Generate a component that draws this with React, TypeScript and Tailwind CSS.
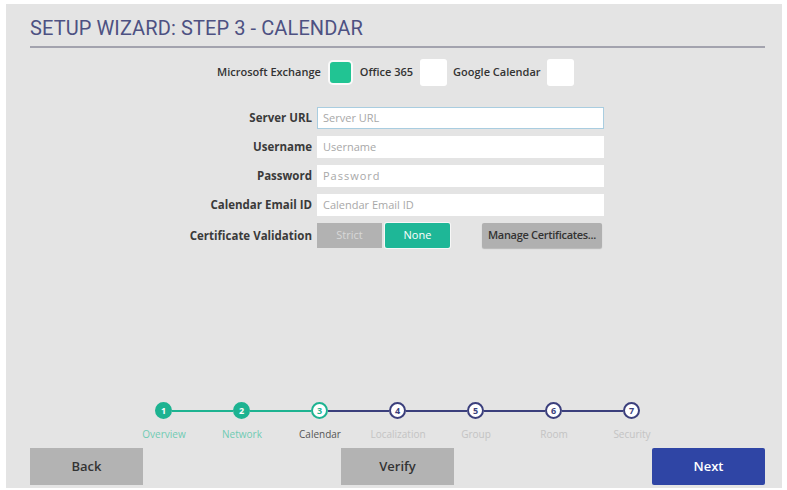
import React from 'react';

const font = { fontFamily: '"Open Sans", "Noto Sans", sans-serif' };

const steps = [
  { n: 1, label: 'Overview', state: 'done' },
  { n: 2, label: 'Network', state: 'done' },
  { n: 3, label: 'Calendar', state: 'current' },
  { n: 4, label: 'Localization', state: 'todo' },
  { n: 5, label: 'Group', state: 'todo' },
  { n: 6, label: 'Room', state: 'todo' },
  { n: 7, label: 'Security', state: 'todo' },
];

const fields = [
  { label: 'Server URL', placeholder: 'Server URL', focused: true },
  { label: 'Username', placeholder: 'Username' },
  { label: 'Password', placeholder: 'Password', spaced: true },
  { label: 'Calendar Email ID', placeholder: 'Calendar Email ID' },
];

function StepCircle({ n, state }: { n: number; state: string }) {
  if (state === 'done') {
    return (
      <div className="w-[17px] h-[17px] rounded-full bg-[#1db391] border-2 border-[#1db391] flex items-center justify-center text-[9px] font-bold text-white shrink-0">
        {n}
      </div>
    );
  }
  if (state === 'current') {
    return (
      <div className="w-[17px] h-[17px] rounded-full bg-white border-2 border-[#1db391] flex items-center justify-center text-[9px] font-bold text-[#1db391] shrink-0">
        {n}
      </div>
    );
  }
  return (
    <div className="w-[17px] h-[17px] rounded-full bg-white border-2 border-[#3b3f7c] flex items-center justify-center text-[9px] font-bold text-[#3b3f7c] shrink-0">
      {n}
    </div>
  );
}

export default function App() {
  return (
    <div className="w-[787px] h-[490px] bg-white pt-[4px] pl-[6px] pr-[5px] pb-[2px]" style={font}>
      <div className="h-full bg-[#e4e4e4] flex flex-col">
        {/* Header */}
        <div className="pl-[24px] pr-[17px] pt-[11px]">
          <h1 className="text-[20px] leading-[26px] text-[#4d5182] tracking-[0.1px] font-['Roboto',sans-serif]">
            SETUP WIZARD: STEP 3 - CALENDAR
          </h1>
          <div className="mt-[5px] h-[2px] bg-[#a3a3ae]" />
        </div>

        {/* Calendar providers */}
        <div className="flex items-center pl-[211px] mt-[10px] h-[28px] text-[11px] font-semibold text-[#333]">
          <span>Microsoft Exchange</span>
          <div className="ml-[9px] w-[21px] h-[21px] rounded-[3px] bg-[#21c493] ring-2 ring-white/80" />
          <span className="ml-[9px]">Office 365</span>
          <div className="ml-[7px] w-[27px] h-[27px] rounded-[3px] bg-white" />
          <span className="ml-[6px]">Google Calendar</span>
          <div className="ml-[6px] w-[27px] h-[27px] rounded-[3px] bg-white" />
        </div>

        {/* Form */}
        <div className="mt-[21px] ml-[176px] grid grid-cols-[130px_287px] gap-x-[5px] gap-y-[7px] items-center">
          {fields.map((f) => (
            <React.Fragment key={f.label}>
              <div className="text-right text-[11.5px] font-bold text-[#3a3a3a] whitespace-nowrap">{f.label}</div>
              <div
                className={
                  f.focused
                    ? 'h-[22px] bg-white border border-[#a9cde0] flex items-center px-[5px]'
                    : 'h-[22px] bg-white flex items-center px-[6px]'
                }
              >
                <span
                  className={
                    f.spaced
                      ? 'text-[11px] text-[#a8a8a8] tracking-[1px]'
                      : 'text-[11px] text-[#a8a8a8]'
                  }
                >
                  {f.placeholder}
                </span>
              </div>
            </React.Fragment>
          ))}
          <div className="text-right text-[11.5px] font-bold text-[#3a3a3a] whitespace-nowrap">Certificate Validation</div>
          <div className="flex items-center h-[25px]">
            <button className="w-[65px] h-[25px] bg-[#b2b2b2] text-[11px] text-[#d8d8d8]">Strict</button>
            <button className="ml-[3px] w-[65px] h-[25px] bg-[#1eb797] text-[11px] text-white rounded-[2px] ring-1 ring-white/70">
              None
            </button>
            <button className="ml-[32px] w-[120px] h-[25px] bg-[#b0b0b0] text-[11px] font-semibold text-[#333] rounded-[2px] tracking-[-0.3px] shadow-[0_1px_1px_rgba(0,0,0,0.2)]">
              Manage Certificates...
            </button>
          </div>
        </div>

        {/* Stepper */}
        <div className="mt-auto">
          <div className="flex items-center ml-[149px]">
            {steps.map((s, i) => (
              <React.Fragment key={s.n}>
                <StepCircle n={s.n} state={s.state} />
                {i < steps.length - 1 && (
                  <div
                    className={
                      i < 2 ? 'w-[61px] h-[2px] bg-[#1db391]' : 'w-[61px] h-[2px] bg-[#3b3f7c]'
                    }
                  />
                )}
              </React.Fragment>
            ))}
          </div>
          <div className="flex ml-[119px] mt-[8px]">
            {steps.map((s) => (
              <div
                key={s.n}
                className={
                  s.state === 'done'
                    ? 'w-[78px] text-center text-[10px] leading-[14px] text-[#6fcbb3]'
                    : s.state === 'current'
                      ? 'w-[78px] text-center text-[10px] leading-[14px] text-[#555]'
                      : 'w-[78px] text-center text-[10px] leading-[14px] text-[#c3c3c3]'
                }
              >
                {s.label}
              </div>
            ))}
          </div>
        </div>

        {/* Footer buttons */}
        <div className="flex justify-between pl-[24px] pr-[17px] mt-[7px] pb-[3px]">
          <button className="w-[113px] h-[37px] bg-[#b3b3b3] text-[13px] font-semibold text-[#333]">Back</button>
          <button className="w-[113px] h-[37px] bg-[#b3b3b3] text-[13px] font-semibold text-[#333]">Verify</button>
          <button className="w-[113px] h-[37px] bg-[#2f45a5] text-[13px] font-semibold text-white rounded-[2px]">
            Next
          </button>
        </div>
      </div>
    </div>
  );
}
